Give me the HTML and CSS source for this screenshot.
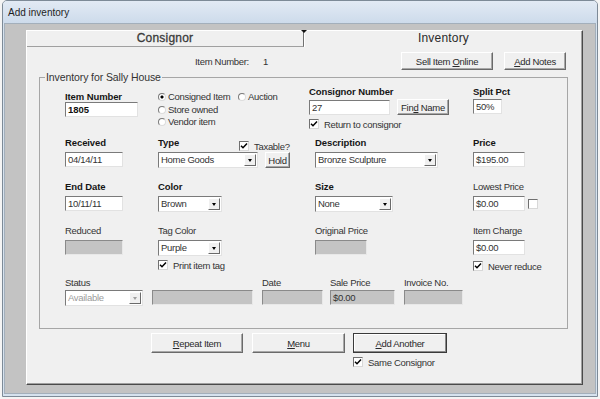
FILE: index.html
```html
<!DOCTYPE html>
<html lang="en">
  <head>
    <meta charset="UTF-8" />
    <meta name="viewport" content="width=device-width, initial-scale=1.0" />
    <title>Add inventory</title>
    <link rel="stylesheet" href="styles.css">
  </head>
  <body>
    <div class="window">
      <div class="titlebar">Add inventory</div>
      <div class="client">
        <div class="panel">
          <div class="tabs">
            <div class="tab tab-back">Consignor</div>
            <div class="tab tab-front">Inventory</div>
          </div>

          <div class="header">
            <span class="item-no-label">Item Number:</span>
            <span class="item-no">1</span>
            <button class="btn btn-online">Sell Item <u>O</u>nline</button>
            <button class="btn btn-notes"><u>A</u>dd Notes</button>
          </div>

          <fieldset class="group">
            <legend>Inventory for Sally House</legend>
            <div class="rows">
              <!-- item number / kind / consignor -->
              <div class="row row-first">
                <div class="col-a pad-item">
                  <div class="lbl bold short">Item Number</div>
                  <div class="field strong w-item">1805</div>
                </div>
                <div class="col-b radios">
                  <div class="radio-line">
                    <span class="opt opt-wide"><span class="radio on"></span>Consigned Item</span>
                    <span class="opt"><span class="radio"></span>Auction</span>
                  </div>
                  <div class="radio-line">
                    <span class="opt"><span class="radio"></span>Store owned</span>
                  </div>
                  <div class="radio-line">
                    <span class="opt"><span class="radio"></span>Vendor item</span>
                  </div>
                </div>
                <div class="col-c">
                  <div class="lbl bold">Consignor Number</div>
                  <div class="ctl-line near">
                    <div class="field w-consignor">27</div>
                    <button class="btn btn-find">Fin<u>d</u> Name</button>
                  </div>
                  <div class="check-line gap3">
                    <span class="check"><svg width="8" height="8" viewBox="0 0 8 8"><polyline points="1,3.8 3,5.8 7,1.6" fill="none" stroke="#000" stroke-width="1.5"/></svg></span>Return to consignor
                  </div>
                </div>
                <div class="col-d">
                  <div class="lbl bold">Split Pct</div>
                  <div class="field near w-split">50%</div>
                </div>
              </div>

              <!-- received / type / description / price -->
              <div class="row">
                <div class="col-a">
                  <div class="lbl bold">Received</div>
                  <div class="field ctl w-date">04/14/11</div>
                </div>
                <div class="col-b">
                  <div class="lbl-line">
                    <span class="lbl bold w-type-lbl">Type</span>
                    <span class="check-line taxable">
                      <span class="check"><svg width="8" height="8" viewBox="0 0 8 8"><polyline points="1,3.8 3,5.8 7,1.6" fill="none" stroke="#000" stroke-width="1.5"/></svg></span>Taxable?
                    </span>
                  </div>
                  <div class="ctl-line ctl">
                    <div class="combo w-type"><span class="combo-text">Home Goods</span><span class="combo-btn"></span></div>
                    <button class="btn btn-hold">Hold</button>
                  </div>
                </div>
                <div class="col-c shift">
                  <div class="lbl bold">Description</div>
                  <div class="combo ctl w-desc"><span class="combo-text">Bronze Sculpture</span><span class="combo-btn"></span></div>
                </div>
                <div class="col-d">
                  <div class="lbl bold">Price</div>
                  <div class="field ctl w-price">$195.00</div>
                </div>
              </div>

              <!-- end date / color / size / lowest price -->
              <div class="row">
                <div class="col-a">
                  <div class="lbl bold">End Date</div>
                  <div class="field ctl w-date">10/11/11</div>
                </div>
                <div class="col-b">
                  <div class="lbl bold">Color</div>
                  <div class="combo ctl w-color"><span class="combo-text">Brown</span><span class="combo-btn"></span></div>
                </div>
                <div class="col-c shift">
                  <div class="lbl bold">Size</div>
                  <div class="combo ctl w-size"><span class="combo-text">None</span><span class="combo-btn"></span></div>
                </div>
                <div class="col-d">
                  <div class="lbl">Lowest Price</div>
                  <div class="ctl-line ctl">
                    <div class="field w-price">$0.00</div>
                    <span class="check lone"></span>
                  </div>
                </div>
              </div>

              <!-- reduced / tag color / original price / item charge -->
              <div class="row row-tall">
                <div class="col-a">
                  <div class="lbl">Reduced</div>
                  <div class="field gray ctl w-date"></div>
                </div>
                <div class="col-b">
                  <div class="lbl">Tag Color</div>
                  <div class="combo ctl w-color"><span class="combo-text">Purple</span><span class="combo-btn"></span></div>
                  <div class="check-line gap3">
                    <span class="check"><svg width="8" height="8" viewBox="0 0 8 8"><polyline points="1,3.8 3,5.8 7,1.6" fill="none" stroke="#000" stroke-width="1.5"/></svg></span>Print item tag
                  </div>
                </div>
                <div class="col-c shift">
                  <div class="lbl">Original Price</div>
                  <div class="field gray ctl w-price"></div>
                </div>
                <div class="col-d">
                  <div class="lbl">Item Charge</div>
                  <div class="field ctl w-price">$0.00</div>
                  <div class="check-line gap4">
                    <span class="check"><svg width="8" height="8" viewBox="0 0 8 8"><polyline points="1,3.8 3,5.8 7,1.6" fill="none" stroke="#000" stroke-width="1.5"/></svg></span>Never reduce
                  </div>
                </div>
              </div>

              <!-- status / sale -->
              <div class="row-last">
                <div class="cell">
                  <div class="lbl">Status</div>
                  <div class="combo off near w-status"><span class="combo-text">Available</span><span class="combo-btn"></span></div>
                </div>
                <div class="cell">
                  <div class="lbl"></div>
                  <div class="field gray near w-blank"></div>
                </div>
                <div class="cell">
                  <div class="lbl">Date</div>
                  <div class="field gray near w-sdate"></div>
                </div>
                <div class="cell cell-sale">
                  <div class="lbl">Sale Price</div>
                  <div class="field gray near w-sale">$0.00</div>
                </div>
                <div class="cell">
                  <div class="lbl">Invoice No.</div>
                  <div class="field gray near w-invoice"></div>
                </div>
              </div>
            </div>
          </fieldset>

          <div class="actions">
            <button class="btn btn-wide"><u>R</u>epeat Item</button>
            <button class="btn btn-wide btn-menu"><u>M</u>enu</button>
            <div class="action-stack">
              <button class="btn btn-wide btn-default"><u>A</u>dd Another</button>
              <div class="check-line gap3">
                <span class="check"><svg width="8" height="8" viewBox="0 0 8 8"><polyline points="1,3.8 3,5.8 7,1.6" fill="none" stroke="#000" stroke-width="1.5"/></svg></span>Same Consignor
              </div>
            </div>
          </div>
        </div>
      </div>
    </div>
  </body>
</html>
```

FILE: styles.css
```css
body {
  margin: 0;
  background-color: #f4f4f4;
  font-family: "Liberation Sans", Arial, sans-serif;
  font-size: 9.5px;
  letter-spacing: -0.3px;
  color: #333;
}

/* Window frame */
.window {
  margin-left: 2px;
  width: 596px;
  height: 397px;
  box-sizing: border-box;
  border: 1px solid #7d8a97;
  border-radius: 5px 5px 0 0;
  background-color: #d6e2ee;
  display: flex;
  flex-direction: column;
}

.titlebar {
  height: 22px;
  padding-left: 5px;
  line-height: 24px;
  font-size: 10px;
  letter-spacing: 0;
  color: #1e1e1e;
  border-radius: 4px 4px 0 0;
  background: linear-gradient(#e2eaf4, #cddbeb);
}

.client {
  flex: 1;
  display: flex;
  margin: 0 1px 2px;
  border: 1px solid #a3afbb;
  background-color: #c3c3c3;
  padding: 6px 12px 8px 21px;
}

.panel {
  flex: 1;
  display: flex;
  flex-direction: column;
  background-color: #f0f0f0;
  border: 1px solid;
  border-color: #fff #4a4a4a #4a4a4a #fff;
  box-shadow: inset -1px -1px 0 #a0a0a0;
}

/* Tabs */
.tabs {
  display: flex;
  height: 16px;
}

.tab {
  box-sizing: border-box;
  text-align: center;
  font-size: 12px;
  line-height: 15px;
  letter-spacing: 0.2px;
}

.tab-back {
  position: relative;
  width: 277px;
  border-right: 1px solid #707070;
  border-bottom: 1px solid #a0a0a0;
  color: #3a3a3a;
  -webkit-text-stroke: 0.3px #3a3a3a;
}

.tab-back::after {
  content: "";
  position: absolute;
  right: -4px;
  top: -1px;
  border-left: 3px solid transparent;
  border-right: 3px solid transparent;
  border-top: 3px solid #111;
}

.tab-front {
  flex: 1;
  color: #2a2a2a;
  border-left: 1px solid #fff;
}

/* Header line */
.header {
  display: flex;
  align-items: center;
  height: 18px;
  margin-top: 5px;
  padding-left: 168px;
  padding-right: 16px;
}

.item-no-label {
  width: 68px;
}

/* Buttons */
.btn {
  font-family: inherit;
  font-size: 9.5px;
  letter-spacing: -0.3px;
  color: #2a2a2a;
  background-color: #f0f0f0;
  padding: 0;
  box-sizing: border-box;
  border: 1px solid;
  border-color: #fff #6a6a6a #6a6a6a #fff;
  box-shadow: inset -1px -1px 0 #a8a8a8;
  white-space: nowrap;
}

.btn-online {
  margin-left: auto;
  width: 92px;
  height: 18px;
}

.btn-notes {
  margin-left: 11px;
  width: 62px;
  height: 18px;
}

.btn-find {
  margin-left: 7px;
  width: 52px;
  height: 16px;
}

.btn-hold {
  margin-left: 7px;
  width: 25px;
  height: 16px;
}

.btn-wide {
  width: 92px;
  height: 20px;
}

.btn-menu {
  width: 93px;
  margin-left: 9px;
}

.btn-default {
  width: 94px;
  border-color: #3a3a3a;
  box-shadow: inset -1px -1px 0 #8a8a8a, inset 1px 1px 0 #fff;
}

/* Group box */
.group {
  margin: 1px 14px 0 12px;
  padding: 3px 0 22px 0;
  border: 1px solid #a6a6a6;
  min-width: 0;
}

.group legend {
  margin-left: 5px;
  padding: 0 1px;
  font-size: 10.5px;
  letter-spacing: -0.1px;
  line-height: 12px;
  color: #333;
}

.rows {
  padding-left: 25px;
}

.row {
  display: flex;
  height: 44px;
}

.row-first {
  height: 51px;
}

.row-tall {
  height: 52px;
}

.col-a {
  width: 93px;
}

.col-b {
  width: 151px;
}

.col-c {
  width: 164px;
}

.col-d {
  flex: 1;
}

.shift {
  padding-left: 6px;
  box-sizing: border-box;
}

.pad-item {
  padding-top: 5px;
}

/* Labels */
.lbl {
  height: 12px;
  line-height: 12px;
  white-space: nowrap;
}

.bold {
  font-weight: bold;
  font-size: 9.5px;
  letter-spacing: -0.1px;
  color: #151515;
}

.short {
  height: 11px;
  line-height: 11px;
}

.lbl-line {
  display: flex;
  align-items: flex-start;
  height: 12px;
}

.w-type-lbl {
  width: 81px;
}

/* Inputs */
.field {
  height: 15px;
  box-sizing: border-box;
  border: 1px solid;
  border-color: #7a7a7a #e2e2e2 #e2e2e2 #7a7a7a;
  background-color: #fff;
  padding-left: 2px;
  line-height: 13px;
  white-space: nowrap;
}

.strong {
  font-weight: bold;
  letter-spacing: 0;
  color: #111;
}

.gray {
  background-color: #c4c4c4;
  border-color: #8a8a8a #e8e8e8 #e8e8e8 #8a8a8a;
}

.ctl {
  margin-top: 3px;
}

.near {
  margin-top: 1px;
}

.ctl-line {
  display: flex;
  align-items: center;
}

.combo {
  display: flex;
  height: 16px;
  box-sizing: border-box;
  border: 1px solid;
  border-color: #7a7a7a #e2e2e2 #e2e2e2 #7a7a7a;
  background-color: #fff;
}

.combo-text {
  flex: 1;
  padding-left: 2px;
  line-height: 14px;
  white-space: nowrap;
  overflow: hidden;
}

.combo-btn {
  width: 12px;
  margin: 1px;
  box-sizing: border-box;
  border: 1px solid;
  border-color: #fff #6a6a6a #6a6a6a #fff;
  background-color: #f0f0f0;
  display: flex;
  align-items: center;
  justify-content: center;
}

.combo-btn::before {
  content: "";
  border-left: 2.5px solid transparent;
  border-right: 2.5px solid transparent;
  border-top: 3px solid #000;
}

.combo.off .combo-text {
  color: #9c9c9c;
}

.combo.off .combo-btn::before {
  border-top-color: #a0a0a0;
}

.w-item { width: 73px; }
.w-consignor { width: 81px; }
.w-split { width: 29px; }
.w-date { width: 58px; }
.w-price { width: 52px; }
.w-type { width: 100px; }
.w-desc { width: 123px; }
.w-color { width: 64px; }
.w-size { width: 78px; }
.w-status { width: 78px; }
.w-blank { width: 101px; }
.w-sdate { width: 61px; }
.w-sale { width: 65px; }
.w-invoice { width: 59px; }

/* Radios and checkboxes */
.radios {
  padding-top: 5px;
  box-sizing: border-box;
}

.radio-line {
  display: flex;
  height: 12.5px;
  line-height: 12px;
}

.opt {
  display: flex;
  align-items: center;
  white-space: nowrap;
}

.opt-wide {
  width: 80px;
}

.radio {
  width: 8px;
  height: 8px;
  box-sizing: border-box;
  border-radius: 50%;
  border: 1px solid;
  border-color: #7a7a7a #dcdcdc #dcdcdc #7a7a7a;
  background-color: #fff;
  margin-right: 2px;
}

.radio.on {
  background: radial-gradient(circle, #000 0 1.3px, #fff 1.8px);
}

.check-line {
  display: flex;
  align-items: center;
  height: 12px;
  white-space: nowrap;
}

.gap3 {
  margin-top: 3px;
}

.gap4 {
  margin-top: 5px;
}

.taxable {
  margin-top: 3px;
}

.check {
  display: flex;
  align-items: center;
  justify-content: center;
  width: 10px;
  height: 10px;
  box-sizing: border-box;
  border: 1px solid;
  border-color: #707070 #d8d8d8 #d8d8d8 #707070;
  background-color: #fff;
  margin-right: 5px;
}

.check.lone {
  margin-left: 3px;
  margin-right: 0;
}

/* Status line */
.row-last {
  display: flex;
}

.cell {
  margin-right: 9px;
}

.cell-sale {
  margin-left: -2px;
}

/* Bottom buttons */
.actions {
  display: flex;
  align-items: flex-start;
  margin-top: 4px;
  padding-left: 124px;
}

.action-stack {
  margin-left: 8px;
}
```
